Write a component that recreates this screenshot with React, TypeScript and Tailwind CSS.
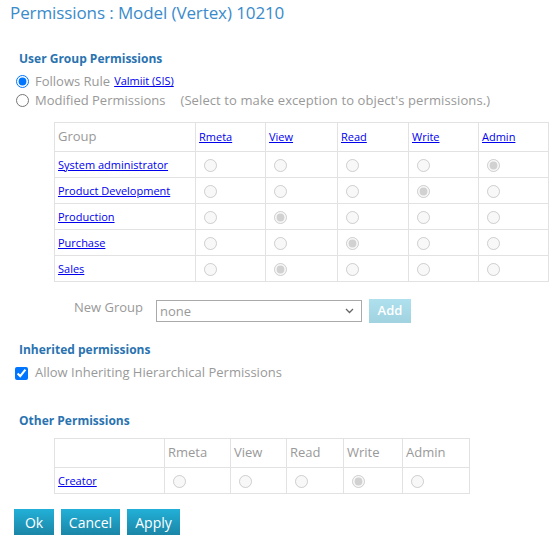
import React from 'react';

const cols = ['Rmeta', 'View', 'Read', 'Write', 'Admin'];
const colWidths = ['w-[70px]', 'w-[72px]', 'w-[71px]', 'w-[70px]', 'w-[70px]'];
const otherWidths = ['w-[66px]', 'w-[56px]', 'w-[57px]', 'w-[59px]', 'w-[67px]'];

const groups: { name: string; checked: number }[] = [
  { name: 'System administrator', checked: 4 },
  { name: 'Product Development', checked: 3 },
  { name: 'Production', checked: 1 },
  { name: 'Purchase', checked: 2 },
  { name: 'Sales', checked: 1 },
];

function Radio({ checked }: { checked: boolean }) {
  return <input type="radio" disabled checked={checked} readOnly className="m-0 ml-[8px] w-[13px] h-[13px] align-middle" />;
}

export default function App() {
  return (
    <div className="w-[558px] h-[544px] bg-white text-[#999] text-[13px] overflow-hidden" style={{ fontFamily: '"Open Sans", sans-serif' }}>
      <h1 className="pl-[10px] pt-[1px] text-[17px] leading-[24px] text-[#3a8bcb] tracking-[-0.1px]">Permissions : Model (Vertex) 10210</h1>

      <div className="pl-[19px] mt-[25px] text-[12px] font-bold text-[#2a73b0] leading-[18px]">User Group Permissions</div>
      <div className="pl-[16px] mt-[4px] flex items-center h-[19px]">
        <input type="radio" checked readOnly name="rule" className="m-0 w-[13px] h-[13px]" />
        <span className="ml-[6px]">Follows Rule</span>
        <a href="#" className="ml-[4px] text-[11px] text-[#0000ee] underline">Valmiit (SIS)</a>
      </div>
      <div className="pl-[16px] flex items-center h-[19px]">
        <input type="radio" readOnly name="rule" className="m-0 w-[13px] h-[13px]" />
        <span className="ml-[6px]">Modified Permissions</span>
        <span className="ml-[15px] tracking-[0.1px]">(Select to make exception to object's permissions.)</span>
      </div>

      <table className="ml-[54px] mt-[12px] w-[494px] border-collapse table-fixed">
        <thead>
          <tr className="h-[29px]">
            <th className="border border-[#e2e2e2] text-left font-normal pl-[3px] w-[141px] text-[13px]">Group</th>
            {cols.map((c, i) => (
              <th key={c} className={`border border-[#e2e2e2] text-left font-normal pl-[3px] align-middle ${colWidths[i]}`}>
                <a href="#" className="text-[11px] text-[#0000ee] underline">{c}</a>
              </th>
            ))}
          </tr>
        </thead>
        <tbody>
          {groups.map((g) => (
            <tr key={g.name} className="h-[26px]">
              <td className="border border-[#e2e2e2] pl-[3px]">
                <a href="#" className="text-[11px] text-[#0000ee] underline">{g.name}</a>
              </td>
              {cols.map((c, i) => (
                <td key={c} className="border border-[#e2e2e2]">
                  <Radio checked={i === g.checked} />
                </td>
              ))}
            </tr>
          ))}
        </tbody>
      </table>

      <div className="flex items-center mt-[17px] pl-[74px] h-[24px]">
        <span className="w-[82px] -mt-[6px]">New Group</span>
        <div className="relative w-[206px] h-[22px] border border-[#aaa] flex items-center pl-[3px] text-[#999]">
          <span className="mt-[2px]">none</span>
          <svg className="absolute right-[7px] top-[7px]" width="9" height="6" viewBox="0 0 9 6">
            <path d="M1 1 L4.5 4.5 L8 1" fill="none" stroke="#666" strokeWidth="1.3" />
          </svg>
        </div>
        <button className="ml-[7px] w-[42px] h-[24px] bg-gradient-to-b from-[#aee0ee] to-[#a0d2e0] text-white font-semibold text-[13px]">Add</button>
      </div>

      <div className="pl-[19px] mt-[18px] text-[12px] font-bold text-[#2a73b0] leading-[18px]">Inherited permissions</div>
      <div className="pl-[15px] mt-[5px] flex items-center h-[18px]">
        <input type="checkbox" checked readOnly className="m-0 w-[13px] h-[13px]" />
        <span className="ml-[7px]">Allow Inheriting Hierarchical Permissions</span>
      </div>

      <div className="pl-[19px] mt-[30px] text-[12px] font-bold text-[#2a73b0] leading-[18px]">Other Permissions</div>
      <table className="ml-[54px] mt-[8px] w-[416px] border-collapse table-fixed">
        <thead>
          <tr className="h-[29px]">
            <th className="border border-[#e2e2e2] w-[110px]"></th>
            {cols.map((c, i) => (
              <th key={c} className={`border border-[#e2e2e2] text-left font-normal pl-[3px] text-[13px] ${otherWidths[i]}`}>{c}</th>
            ))}
          </tr>
        </thead>
        <tbody>
          <tr className="h-[26px]">
            <td className="border border-[#e2e2e2] pl-[3px]">
              <a href="#" className="text-[11px] text-[#0000ee] underline">Creator</a>
            </td>
            {cols.map((c, i) => (
              <td key={c} className="border border-[#e2e2e2]">
                <Radio checked={i === 3} />
              </td>
            ))}
          </tr>
        </tbody>
      </table>

      <div className="flex gap-[7px] pl-[14px] mt-[15px]">
        <button className="h-[26px] w-[40px] bg-gradient-to-b from-[#22b0d8] to-[#1b86a7] text-white text-[14px]">Ok</button>
        <button className="h-[26px] w-[59px] bg-gradient-to-b from-[#22b0d8] to-[#1b86a7] text-white text-[14px]">Cancel</button>
        <button className="h-[26px] w-[53px] bg-gradient-to-b from-[#22b0d8] to-[#1b86a7] text-white text-[14px]">Apply</button>
      </div>
    </div>
  );
}
